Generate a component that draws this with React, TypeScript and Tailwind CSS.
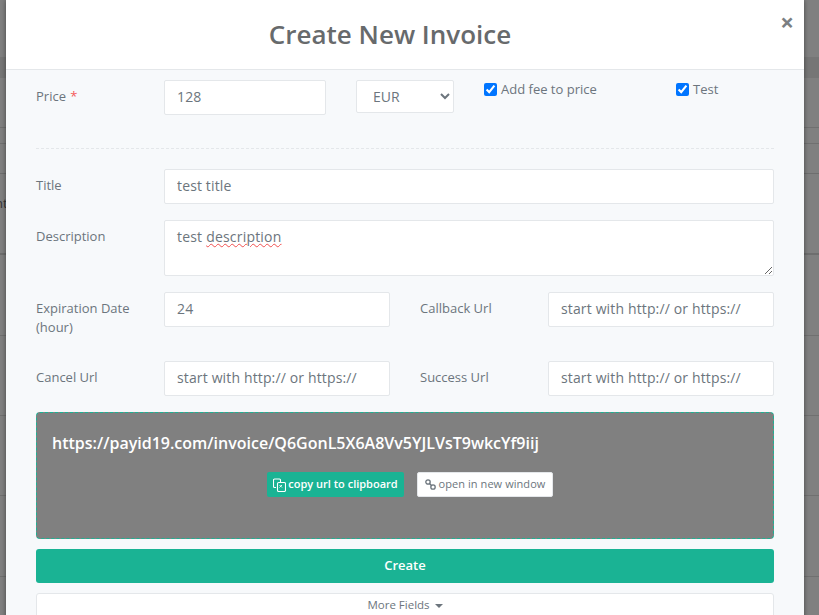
const font = "font-['Open_Sans','Noto_Sans',sans-serif]";
const inputCls =
  "h-[35px] min-w-0 rounded-[2px] border border-[#e4e7ea] bg-white px-3 pb-[2px] text-[14px] tracking-[0.14px] text-[#6c757d] placeholder:text-[#6c757d] outline-none";
const labelCls = "text-[13px] leading-[19px] text-[#6c757d]";

function Row({ children }: { children: React.ReactNode }) {
  return <div className="flex items-start">{children}</div>;
}

export default function App() {
  return (
    <div className={`${font} relative h-[615px] w-[819px] overflow-hidden bg-[#808080]`}>
      <div className="flex flex-col">
        <div className="h-[57px]" />
        <div className="h-[21px] bg-[#767676]" />
        <div className="h-[50px] border-b border-[#707070]" />
        <div className="h-[16px] border-b border-[#707070]" />
        <div className="h-[30px] border-b border-[#6e6e6e]" />
        <div className="flex h-[81px] items-start border-b-2 border-[#6e6e6e] pt-[20px] text-[13px] text-[#333]">
          <span className="-ml-[41px]">Amount</span>
        </div>
        <div className="h-[81px] border-b border-[#707070]" />
        <div className="h-[80px] border-b border-[#707070]" />
        <div className="h-[80px] border-b border-[#707070]" />
        <div className="h-[81px] border-b border-[#707070]" />
      </div>
      <div className="absolute left-[6px] top-0 flex h-[640px] w-[798px] flex-col bg-[#f7f9fb] shadow-[0_0_5px_rgba(0,0,0,0.45)]">
        <div className="relative flex h-[70px] shrink-0 items-center justify-center border-b border-[#e4e7ea] bg-white pr-[30px]">
          <h1 className="text-[26px] leading-[35px] font-semibold text-[#676a6c]">Create New Invoice</h1>
          <span className="absolute right-[10px] top-[10px] text-[24px] leading-[24px] font-bold text-[#7b7f83]">×</span>
        </div>
        <div className="flex flex-col px-[30px] pt-[10px]">
          <Row>
            <div className={`${labelCls} w-[128px] pt-[7px]`}>
              Price <span className="ml-[1px] text-[#f55a5a]">*</span>
            </div>
            <input className={`${inputCls} w-[162px]`} defaultValue="128" />
            <select className="ml-[30px] h-[33px] w-[98px] rounded-[2px] border border-[#e4e7ea] bg-white pl-3 text-[14px] text-[#6c757d] outline-none" defaultValue="EUR">
              <option>EUR</option>
            </select>
            <label className="ml-[30px] flex w-[192px] items-center gap-[4px] text-[13px] leading-[18px] text-[#6c757d]">
              <input type="checkbox" defaultChecked className="h-[13px] w-[13px] accent-[#0075ff]" />
              Add fee to price
            </label>
            <label className="flex items-center gap-[4px] text-[13px] leading-[18px] text-[#6c757d]">
              <input type="checkbox" defaultChecked className="h-[13px] w-[13px] accent-[#0075ff]" />
              Test
            </label>
          </Row>
          <div className="mt-[33px] border-t border-dashed border-[#e4e7ea]" />
          <div className="mt-[20px]">
            <Row>
              <div className={`${labelCls} w-[128px] pt-[7px]`}>Title</div>
              <input className={`${inputCls} flex-1`} defaultValue="test title" />
            </Row>
          </div>
          <div className="mt-[16px]">
            <Row>
              <div className={`${labelCls} w-[128px] pt-[7px]`}>Description</div>
              <div className="h-[56px] flex-1 resize overflow-auto rounded-[2px] border border-[#e4e7ea] bg-white px-3 py-[6px] text-[14px] leading-[20px] tracking-[0.2px] text-[#6c757d]">
                test <span className="underline decoration-[#f05050] decoration-wavy decoration-1 underline-offset-1">description</span>
              </div>
            </Row>
          </div>
          <div className="mt-[16px]">
            <Row>
              <div className={`${labelCls} w-[128px] pt-[7px]`}>
                Expiration Date
                <br />
                (hour)
              </div>
              <input className={`${inputCls} w-[226px]`} defaultValue="24" />
              <div className={`${labelCls} ml-[30px] w-[128px] pt-[7px]`}>Callback Url</div>
              <input className={`${inputCls} w-[226px]`} placeholder="start with http:// or https://" />
            </Row>
          </div>
          <div className="mt-[24px]">
            <Row>
              <div className={`${labelCls} w-[128px] pt-[7px]`}>Cancel Url</div>
              <input className={`${inputCls} w-[226px]`} placeholder="start with http:// or https://" />
              <div className={`${labelCls} ml-[30px] w-[128px] pt-[7px]`}>Success Url</div>
              <input className={`${inputCls} w-[226px]`} placeholder="start with http:// or https://" />
            </Row>
          </div>
          <div className="mt-[16px] flex h-[127px] flex-col rounded-[4px] border border-dashed border-[#1ab394] bg-[#808080] px-[15px] pt-[18px]">
            <div className="text-[16px] leading-[24px] font-semibold text-white">
              https://payid19.com/invoice/Q6GonL5X6A8Vv5YJLVsT9wkcYf9iij
            </div>
            <div className="mt-[17px] ml-[215px] flex gap-[13px]">
              <button className="flex h-[25px] w-[137px] items-center justify-center gap-[2px] rounded-[2px] bg-[#1ab394] text-[11px] font-semibold text-white">
                <svg width="13" height="14" viewBox="0 0 13 14" fill="none" stroke="currentColor" strokeWidth="1.1">
                  <path d="M3 9.5H1.5a1 1 0 0 1-1-1V2a1 1 0 0 1 1-1h5a1 1 0 0 1 1 1v2" />
                  <rect x="4.5" y="4.5" width="8" height="9" rx="1.2" />
                  <path d="M6.5 7l2.5 2.5M9 7l-2.5 2.5" strokeWidth="0.9" />
                </svg>
                copy url to clipboard
              </button>
              <button className="flex h-[25px] w-[136px] items-center justify-center gap-[3px] rounded-[2px] border border-[#e4e7ea] bg-white text-[11px] tracking-[0.06px] text-[#6c757d]">
                <svg width="11" height="11" viewBox="0 0 11 11" fill="none" stroke="currentColor" strokeWidth="1.3">
                  <circle cx="3" cy="3" r="2.2" />
                  <circle cx="8" cy="8" r="2.2" />
                  <path d="M4 4l3 3" />
                </svg>
                open in new window
              </button>
            </div>
          </div>
          <button className="mt-[10px] h-[34px] shrink-0 rounded-[3px] bg-[#1ab394] text-[13px] font-semibold text-white">Create</button>
          <div className="mt-[10px] flex h-[40px] items-start justify-center gap-[5px] rounded-[3px] border border-[#e4e7ea] bg-white pt-[1px] text-[11.5px] leading-[20px] text-[#6c757d]">
            More Fields
            <span className="mt-[9px] h-0 w-0 border-x-[4px] border-t-[4px] border-x-transparent border-t-[#6c757d]" />
          </div>
        </div>
      </div>
    </div>
  );
}
